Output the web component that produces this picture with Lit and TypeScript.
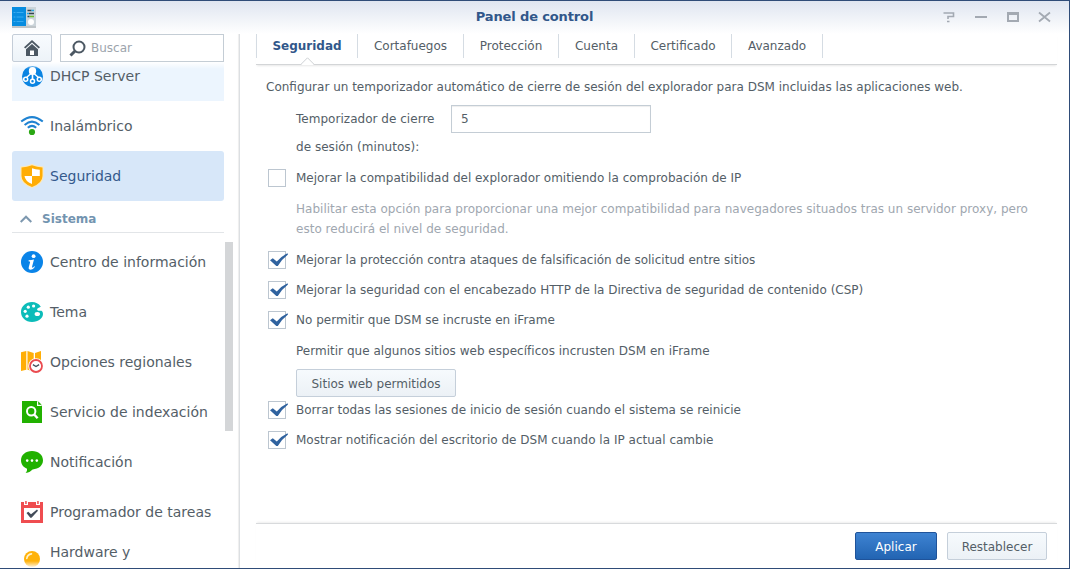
import { LitElement, html, css, svg } from "lit";
import { customElement, property, state } from "lit/decorators.js";
import { classMap } from "lit/directives/class-map.js";

type Entry = { label: string; icon: string };

const NETWORK: Entry[] = [
  { label: "DHCP Server", icon: "dhcp" },
  { label: "Inalámbrico", icon: "wifi" },
  { label: "Seguridad", icon: "shield" },
];

const SYSTEM: Entry[] = [
  { label: "Centro de información", icon: "info" },
  { label: "Tema", icon: "theme" },
  { label: "Opciones regionales", icon: "region" },
  { label: "Servicio de indexación", icon: "index" },
  { label: "Notificación", icon: "bubble" },
  { label: "Programador de tareas", icon: "task" },
  { label: "Hardware y alimentación", icon: "bulb" },
];

const TABS = ["Seguridad", "Cortafuegos", "Protección", "Cuenta", "Certificado", "Avanzado"];

const ICONS: Record<string, unknown> = {
  dhcp: svg`<circle cx="12.500" cy="12.500" r="10.500" fill="#0a84e2"/>
    <ellipse cx="12.500" cy="7" rx="3.700" ry="4" fill="#fff"/><path d="M11.700 9h1.600v6h-1.600z" fill="#fff"/>
    <path d="M11 9.500 6.500 13.500M14 9.500l4.500 4" stroke="#fff" stroke-width="1.400"/>
    <g fill="#0a84e2" stroke="#fff" stroke-width="1.500"><circle cx="5.700" cy="15.300" r="2"/><circle cx="12.500" cy="17.200" r="2"/><circle cx="19.300" cy="15.300" r="2"/></g>`,
  wifi: svg`<g fill="none" stroke="#1f83d2" stroke-width="2"><path d="M1.200 7.600q10.800-9 21.600 0"/><path d="M4.600 10.900q7.400-6.600 14.800 0"/><path d="M7.800 13.800q4.200-3.800 8.400 0"/></g><circle cx="12" cy="18" r="3.100" fill="#2aa713"/>`,
  shield: svg`<path d="M.500 2.500Q7 2 12 0q5 2 11.500 2.500V12q0 8-11.500 12Q.500 20 .500 12z" fill="#ffe9b5"/><path d="M1.500 3.500Q7 3 12 1.200q5 1.800 10.500 2.300V12q0 7-10.500 11Q1.500 19 1.500 12z" fill="#ffad05"/>
    <path d="M12 4.200q3.300 1.300 7.800 1.500V12H12v8Q5 17 4.500 12H12z" fill="#fff"/>`,
  info: svg`<circle cx="12" cy="12" r="11" fill="#0a84e8"/><circle cx="13.600" cy="6.200" r="1.900" fill="#fff"/><path d="M8.700 10.300q2.500-.3 5.300-.8l-1.900 7.100q-.2 1.200.5 1.100.7-.2 1.700-1.500l.7.500q-1.900 3-4.300 3-2.600 0-1.900-2.700l1.300-4.800q.2-1-1.600-1z" fill="#fff"/>`,
  theme: svg`<path d="M12 2C5.500 2 1 6.500 1 12s4.500 10 11 10 11-4 11-8c0-2.500-1.500-3.300-1.500-3.300h-3.200c-1.300-.2-1.700-1.600-.5-2.400l3-1.600C18.800 3.500 15.500 2 12 2z" fill="#0cbcb9"/>
    <g fill="#fff"><circle cx="13.600" cy="6" r="1.600"/><circle cx="8.300" cy="7.200" r="1.600"/><circle cx="5.200" cy="11.300" r="1.600"/><circle cx="7" cy="16.200" r="1.600"/><ellipse cx="17.300" cy="14" rx="2.700" ry="2.100"/></g>`,
  region: svg`<path d="M1 2.200 6.300 1v18.700L1 21zM7.500 1l6.200 2v18.500L7.500 19.700zM15 3l6-2v19l-6 1.500z" fill="#ffae07"/><circle cx="16" cy="16" r="7.800" fill="#fff"/><circle cx="16" cy="16" r="6" fill="#fff" stroke="#ea4b50" stroke-width="1.800"/><path d="m12.900 14.600 3.100 1.900 3.100-1.900" fill="none" stroke="#444f5c" stroke-width="1.300"/>`,
  index: svg`<path d="M2 1h15l5 5v17H2z" fill="#21b100"/><path d="M17 1v5h5z" fill="#fff"/><path d="m18.200 1.200 3.500 3.500h-3.500z" fill="#21b100"/><circle cx="11.200" cy="11.200" r="4.200" fill="none" stroke="#fff" stroke-width="2"/><path d="m14 14.200 3.600 4" stroke="#fff" stroke-width="2.400"/>`,
  bubble: svg`<path d="M12 1C5.500 1 1 5 1 10.300c0 4 2.300 7 6 8.400.3 2-.6 3.300-1.400 4.300 3.500-.5 5.500-2.200 7-3.600C18.800 19.200 23 15.500 23 10.300 23 5 18.500 1 12 1z" fill="#21b100"/><g fill="#fff"><circle cx="7.200" cy="10.600" r="1.300"/><circle cx="12" cy="10.600" r="1.300"/><circle cx="16.800" cy="10.600" r="1.300"/></g>`,
  task: svg`<path d="M1 2h22v21H1z" fill="#ef4d50"/><path d="M4 8h16v12H4z" fill="#fff"/><path d="M4 1h4v4H4zM16 1h4v4h-4z" fill="#fff"/><path d="M5.200 1h1.500v3H5.200zM17.200 1h1.500v3h-1.500z" fill="#ef4d50"/><path d="m6.500 13 1.800-1.200 2.700 2.400 6-4.700 1 1.200-6.500 7h-1.200z" fill="#434c59"/>`,
  bulb: svg`<circle cx="12" cy="12" r="8" fill="#ffb20a"/><path d="M6.800 11.500q.5-4 4.700-4.600" fill="none" stroke="#fff3cf" stroke-width="1.600" stroke-linecap="round"/>`,
};

@customElement("nav-entry")
class NavEntry extends LitElement {
  @property({ attribute: false }) entry!: Entry;
  @property({ type: Boolean, reflect: true }) selected = false;
  @property({ type: Boolean, reflect: true }) hovered = false;
  @property({ type: Boolean, reflect: true }) tall = false;

  static styles = css`
    :host { display: flex; box-sizing: border-box; height: 50px; width: 212px; flex: none; align-items: center;
      padding-left: 8px; gap: 6px; font-size: 14px; color: #545e67; border-radius: 3px; }
    :host([selected]) { background: #d7e7f9; color: #34598c; }
    :host([hovered]) { background: #ecf5fe; border-radius: 0; }
    :host([tall]) { height: 54px; align-items: flex-start; }
    :host([tall]) .pic { margin-top: 10px; }
    :host([tall]) .label { padding-top: 4px; width: 130px; white-space: normal; line-height: 22px; }
    .pic { width: 24px; height: 24px; flex: none; display: block; }
    .label { white-space: nowrap; line-height: 20px; }
  `;

  render() {
    return html`<svg class="pic" viewBox="0 0 24 24">${ICONS[this.entry.icon]}</svg>
      <span class="label">${this.entry.label}</span>`;
  }
}

@customElement("check-row")
class CheckRow extends LitElement {
  @property({ type: Boolean }) checked = false;

  static styles = css`
    :host { display: flex; align-items: center; height: 30px; gap: 8px; padding-left: 12px; }
    .mark { width: 20px; height: 18px; display: block; flex: none; overflow: visible; }
    .text { white-space: nowrap; letter-spacing: .012px; }
  `;

  render() {
    return html`<svg class="mark" viewBox="0 0 20 18">
        <rect x=".5" y=".5" width="17" height="17" fill="#fff" stroke="#bcc6d0"></rect>
        ${this.checked
          ? svg`<path d="M2 9.200 4.800 7.300l4 3.200Q13.500 5 19.500 2.300L20 3.500Q14 8 9.800 15H8.300z" fill="#2f629f"/>`
          : ""}
      </svg><span class="text"><slot></slot></span>`;
  }
}

@customElement("app-root")
class AppRoot extends LitElement {
  @state() tab = "Seguridad";

  static styles = css`
    :host { display: flex; flex-direction: column; box-sizing: border-box; width: 1070px; height: 569px; overflow: hidden;
      background: linear-gradient(#dfe5f0, #fff 33px); border: solid #2f4c78; border-width: 1px 1px 1px 0;
      font-family: Verdana, "DejaVu Sans", sans-serif; font-size: 12px; color: #545e67; }
    .titlebar { display: grid; grid-template-columns: 110px 1fr 110px; height: 33px; flex: none; }
    .logo { width: 24px; height: 21px; margin: 6px 0 0 12px; }
    .title { text-align: center; font-weight: bold; font-size: 13px; letter-spacing: -.13px; line-height: 32px; color: #31578a; }
    .controls { width: 110px; height: 16px; margin: 8px 0 0 -16px; }
    .body { display: flex; flex: 1; min-height: 0; }
    .side { width: 240px; flex: none; box-sizing: border-box; border-right: 1px solid #dcdfe2; display: flex; flex-direction: column; box-shadow: inset -2px 0 1px -1px #eee; }
    .tools { display: flex; gap: 8px; padding-left: 12px; height: 28px; flex: none; }
    .home { box-sizing: border-box; width: 40px; border: 1px solid #c4cdd8; border-radius: 2px; background: linear-gradient(#f8fbfe, #edf3f8); }
    .home-pic { display: block; width: 38px; height: 26px; }
    .search { box-sizing: border-box; width: 164px; border: 1px solid #c4cdd5; background: #fff; display: flex; align-items: center; gap: 5px; padding-left: 8px; color: #9ca4ac; }
    .lens { width: 17px; height: 17px; }
    .scroller { display: flex; flex: 1; min-height: 0; position: relative; }
    .list { flex: none; width: 225px; box-sizing: border-box; padding-left: 12px; overflow: hidden; display: flex; flex-direction: column; }
    .list > .first { margin-top: -11px; }
    .fade { position: absolute; left: 12px; width: 212px; height: 7px; background: linear-gradient(#fff, #fff0); }
    .fade.top { top: 0; }
    .fade.bottom { bottom: 0; transform: scaleY(-1); }
    .group { width: 212px; box-sizing: border-box; height: 32px; flex: none; border-bottom: 1px solid #e2e5e8; display: flex; align-items: center; gap: 10px; padding: 5px 0 0 8px; margin-bottom: 4px; color: #7394b0; font-weight: bold; }
    .caret { width: 12px; height: 8px; }
    .thumb { width: 8px; height: 189px; margin-top: 180px; background: #d4d6d8; }
    .main { flex: 1; min-width: 0; display: flex; flex-direction: column; padding: 0 12px 0 16px; }
    .tabs { box-sizing: border-box; display: grid; grid-template-columns: 101px 106px 95px 76px 97px 91px; height: 31px; flex: none; border-bottom: 1px solid #d3d5d7; box-shadow: 0 2px 2px -1px #e8e8e8; }
    .tab { box-sizing: border-box; height: 24px; line-height: 24px; text-align: center; border-left: 1px solid #d5dce3; white-space: nowrap; position: relative; }
    .tab:last-child { width: 92px; border-right: 1px solid #d5dce3; }
    .tab.on { font-weight: bold; color: #31578a; }
    .notch { position: absolute; left: 44px; top: 23px; width: 13px; height: 8px; }
    .form { flex: 1; padding-top: 12px; }
    .line { height: 20px; line-height: 20px; white-space: nowrap; }
    .intro { padding-left: 10px; }
    .timer { box-sizing: border-box; display: flex; padding: 8px 0 0 40px; height: 66px; }
    .timer-label { width: 155px; line-height: 28px; letter-spacing: .03px; }
    .field { box-sizing: border-box; width: 200px; height: 28px; border: 1px solid #c4cdd5; padding-left: 9px; line-height: 27px; box-shadow: inset 0 1px 1px #eee; }
    .hint { padding: 6px 0 6px 40px; color: #a0a7b0; line-height: 20px; height: 40px; white-space: nowrap; letter-spacing: .012px; }
    .permit { padding: 6px 0 8px 40px; letter-spacing: .02px; }
    .btn { box-sizing: border-box; height: 28px; line-height: 28px; border: 1px solid #c5cfda; border-radius: 2px; background: linear-gradient(#f6fafd, #ecf1f6); text-align: center; }
    .sites { width: 160px; margin: 0 0 -2px 40px; }
    .footer { height: 45px; box-sizing: border-box; border-top: 1px solid #d8dadc; box-shadow: 0 -2px 2px -1px #eee; display: flex; justify-content: flex-end; gap: 10px; padding: 8px 10px 0 0; flex: none; }
    .apply { width: 82px; color: #fff; border-color: #1f539a; background: linear-gradient(#3e83d2, #2264b2); }
    .reset { width: 100px; }
  `;

  render() {
    return html`
      <div class="titlebar">
        <svg class="logo" viewBox="0 0 24 21">
          <path d="M0 19h24v2H0z" fill="#bfc5c9"/><path d="M14 0h10v19H14z" fill="#cbd4da"/><path d="M0 0h14v19H0z" fill="#078ce0"/>
          <path d="M1.500 5.500h2m1 0h7M1.500 10h2m1 0h7M1.500 14.500h2m1 0h7" stroke="#45b4f5" stroke-width=".8"/>
          <path d="M15.500 3.500h4M17 6.500h5M15.500 9.500h2" stroke="#34434f" stroke-width="1.500"/><path d="M19.500 3.500H22M15 6.500h2" stroke="#25a8e0" stroke-width="1.500"/><path d="M17.500 9.500H22" stroke="#6cbf2b" stroke-width="1.500"/>
          <circle cx="19" cy="15" r="3" fill="#fff"/>
        </svg>
        <div class="title">Panel de control</div>
        <svg class="controls" viewBox="0 0 110 16" fill="none" stroke="#a3a9b2" stroke-width="2">
          <path d="M.500 4h10v3.500H5V10M4 12.500h2.500" stroke-width="1.600"/><path d="M32 8h12"/>
          <path d="M65 4.500h10v7.500H65z"/><path d="M64 4.500h12" stroke-width="3"/>
          <path d="m96 3.500 11 9m0-9-11 9" stroke-width="1.800"/>
        </svg>
      </div>
      <div class="body">
        <div class="side">
          <div class="tools">
            <div class="home"><svg class="home-pic" viewBox="0 0 38 26"><path d="m19 5 8 7.300-1.300 1.300L19 7.600l-6.700 6L11 12.300z" fill="#4c5863"/><path d="m19 9 6 5.300V21H13v-6.700z" fill="#4c5863"/><path d="M17 15.500h4V20h-4z" fill="#fff"/></svg></div>
            <div class="search"><svg class="lens" viewBox="0 0 17 17" fill="none" stroke="#4c5863"><circle cx="10" cy="7" r="5.500" stroke-width="2"/><path d="m6 11-4.500 4.500" stroke-width="3"/></svg>Buscar</div>
          </div>
          <div class="scroller">
            <div class="list">
              ${NETWORK.map((e, i) => html`<nav-entry class=${classMap({ first: i === 0 })} .entry=${e} ?hovered=${i === 0} ?selected=${e.label === this.tab}></nav-entry>`)}
              <div class="group"><svg class="caret" viewBox="0 0 12 8" fill="none" stroke="#7d98af" stroke-width="2"><path d="m.7 7L6 1.700 11.300 7"/></svg>Sistema</div>
              ${SYSTEM.map((e) => html`<nav-entry .entry=${e} ?tall=${e.icon === "bulb"}></nav-entry>`)}
            </div>
            <div class="thumb"></div>
            <div class="fade top"></div>
            <div class="fade bottom"></div>
          </div>
        </div>
        <div class="main">
          <div class="tabs">
            ${TABS.map((t) => html`<div class=${classMap({ tab: true, on: t === this.tab })}>${t}${t === this.tab
              ? html`<svg class="notch" viewBox="0 0 13 8"><path d="M.5 7 6.500 1l6 6v1H.5z" fill="#fff"/><path d="M0 7.300 6.500.800 13 7.300" fill="none" stroke="#ced1d4"/></svg>` : ""}</div>`)}
          </div>
          <div class="form">
            <div class="line intro">Configurar un temporizador automático de cierre de sesión del explorador para DSM incluidas las aplicaciones web.</div>
            <div class="timer"><div class="timer-label">Temporizador de cierre<br>de sesión (minutos):</div><div class="field">5</div></div>
            <check-row>Mejorar la compatibilidad del explorador omitiendo la comprobación de IP</check-row>
            <div class="hint">Habilitar esta opción para proporcionar una mejor compatibilidad para navegadores situados tras un servidor proxy, pero<br>esto reducirá el nivel de seguridad.</div>
            <check-row checked>Mejorar la protección contra ataques de falsificación de solicitud entre sitios</check-row>
            <check-row checked>Mejorar la seguridad con el encabezado HTTP de la Directiva de seguridad de contenido (CSP)</check-row>
            <check-row checked>No permitir que DSM se incruste en iFrame</check-row>
            <div class="line permit">Permitir que algunos sitios web específicos incrusten DSM en iFrame</div>
            <div class="btn sites">Sitios web permitidos</div>
            <check-row checked>Borrar todas las sesiones de inicio de sesión cuando el sistema se reinicie</check-row>
            <check-row checked>Mostrar notificación del escritorio de DSM cuando la IP actual cambie</check-row>
          </div>
          <div class="footer"><div class="btn apply">Aplicar</div><div class="btn reset">Restablecer</div></div>
        </div>
      </div>`;
  }
}
